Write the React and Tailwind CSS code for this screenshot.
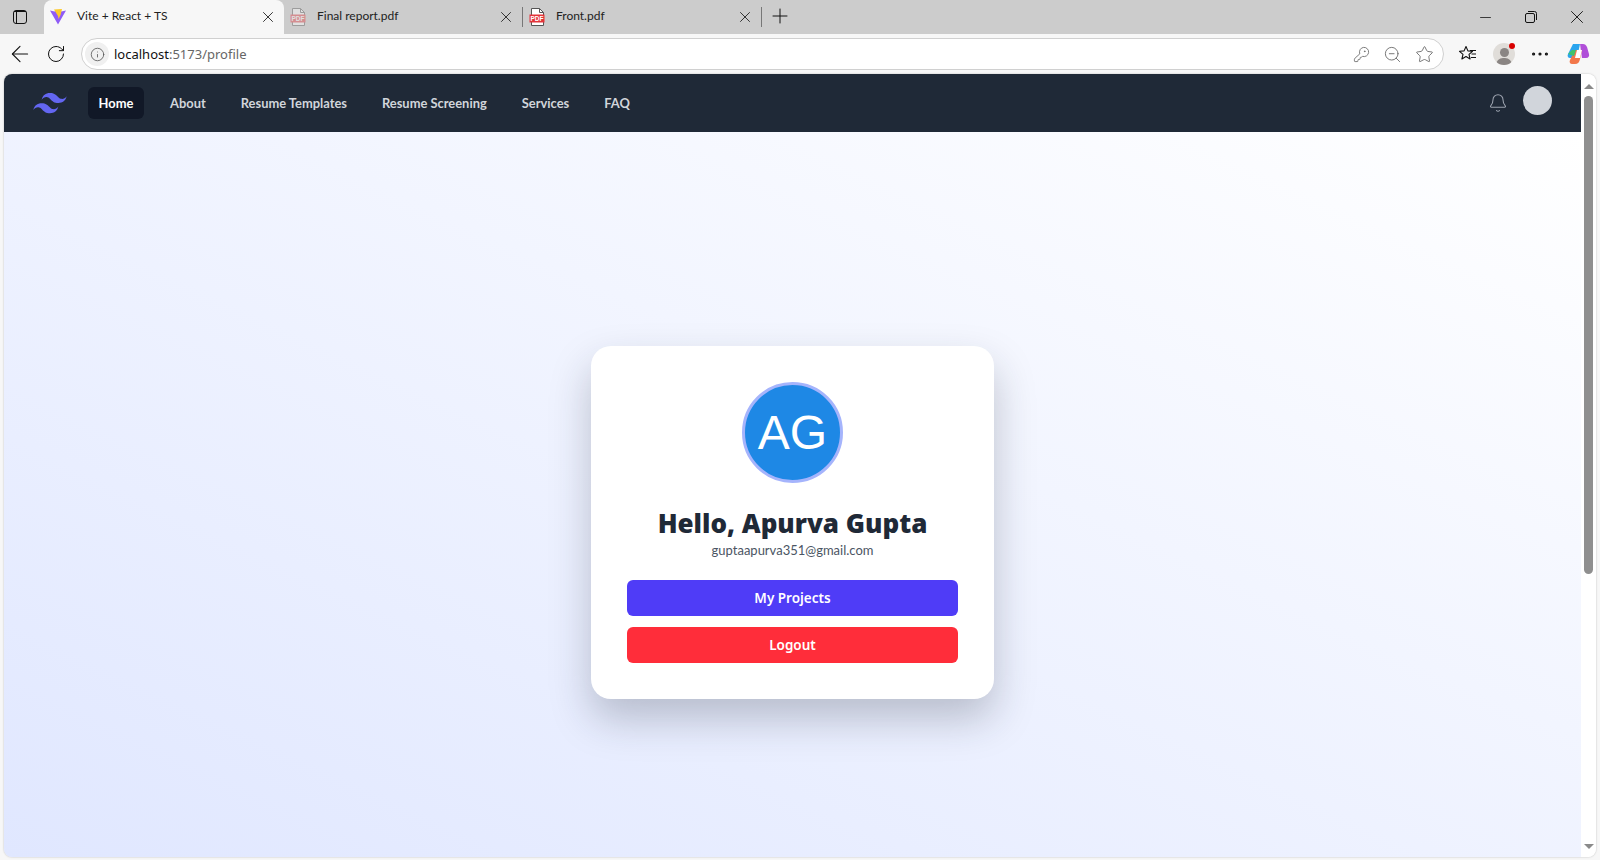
import React from 'react';
import { ArrowLeft, Bell, Info, KeyRound, Minus, MoreHorizontal, Plus, RotateCw, Star, X, ZoomOut } from 'lucide-react';

const navLinks = ['About', 'Resume Templates', 'Resume Screening', 'Services', 'FAQ'];

const ViteIcon = () => (
  <svg width="18" height="18" viewBox="0 0 18 18">
    <path d="M1 2.5 9 16.5 17 2.5 12.5 3.4 9 2 5.5 3.4z" fill="#8f5cf6" />
    <path d="M5 1.5 13 1 11.5 7 9.5 11 9 8z" fill="#fdc928" />
  </svg>
);

const PdfIcon = ({ faded }) => (
  <svg width="16" height="18" viewBox="0 0 16 18" className={faded ? 'opacity-40' : ''}>
    <path d="M2.5.5h8l4 4v13h-12z" fill="#fff" stroke="#555" />
    <path d="M10.5.5v4h4" fill="none" stroke="#555" />
    <rect x="0.5" y="6.5" width="15" height="8" fill="#e3343a" />
    <text x="8" y="13" fontSize="6.5" fontWeight="700" fill="#fff" textAnchor="middle" fontFamily="Liberation Sans, sans-serif">PDF</text>
  </svg>
);

const Tab = ({ icon, title, width, active }) => (
  <div
    className={`flex items-center h-[34px] shrink-0 pl-[5px] pr-[7px] ${active ? 'bg-[#f7f7f7] rounded-t-[8px]' : ''}`}
    style={{ width }}
  >
    <div className="w-[18px] flex justify-center shrink-0">{icon}</div>
    <span className="ml-[10px] -mt-[2px] flex-1 text-[12px] text-[#222] font-['Lato',sans-serif]">{title}</span>
    <X size={18} strokeWidth={1.2} className="text-[#222] shrink-0" />
  </div>
);

const Copilot = () => (
  <svg width="24" height="24" viewBox="0 0 24 24">
    <path d="M7 2h7l-3 14H4C2 16 1 14 2 12z" fill="#2aa5ee" />
    <path d="M14 2h3c2 0 3 1 4 3l2 7c.5 2-.5 4-3 4h-4z" fill="#b04fd8" />
    <path d="M9 8h7l-2 9c-.5 3-2 5-5 5H6c-2 0-3-2-2-4z" fill="#f2774a" />
    <path d="M11 8h5l-2 8h-5z" fill="#fff" />
    <path d="M2 12l4-4h4l-2 6z" fill="#3ec46d" />
  </svg>
);

const FavoritesIcon = () => (
  <svg width="20" height="20" viewBox="0 0 20 20" fill="none" stroke="#111" strokeWidth="1.1" strokeLinejoin="round">
    <path d="M8 2.5l1.9 4.4 4.6.4-3.5 3 1.1 4.7L8 12.5l-4.1 2.5 1.1-4.7-3.5-3 4.6-.4z" />
    <path d="M12 6.5h6M13.5 10h4.5M13 13.5h5" />
  </svg>
);

const App = () => {
  return (
    <div className="w-[1600px] h-[860px] overflow-hidden flex flex-col bg-[#f7f7f7] font-['Noto_Sans',sans-serif]">
      {/* tab strip */}
      <div className="h-[34px] bg-[#cccccc] flex items-center shrink-0">
        <div className="w-[44px] pr-[4px] flex justify-center shrink-0">
          <div className="w-[14px] h-[14px] border border-[#111] rounded-[3px] flex flex-col">
            <div className="h-[1px] bg-[#111]" />
            <div className="w-[3px] flex-1 border-r border-[#111]" />
          </div>
        </div>
        <Tab active width={240} icon={<ViteIcon />} title="Vite + React + TS" />
        <Tab width={238} icon={<PdfIcon faded />} title="Final report.pdf" />
        <div className="w-px h-[20px] bg-[#777] shrink-0" />
        <Tab width={238} icon={<PdfIcon />} title="Front.pdf" />
        <div className="w-px h-[20px] bg-[#777] shrink-0" />
        <Plus size={24} strokeWidth={1} className="ml-[6px] -mt-[2px] text-[#111]" />
        <div className="flex-1" />
        <div className="flex items-center">
          <div className="w-[46px] flex justify-center"><Minus size={17} strokeWidth={1.1} className="text-[#111]" /></div>
          <div className="w-[46px] flex justify-center">
            <svg width="14" height="14" viewBox="0 0 14 14" fill="none" stroke="#111" strokeWidth="1">
              <rect x="1.5" y="3.5" width="9" height="9" rx="1.5" />
              <path d="M4 1.5h6.5a2 2 0 0 1 2 2V10" />
            </svg>
          </div>
          <div className="w-[46px] flex justify-center"><X size={22} strokeWidth={1} className="text-[#111]" /></div>
        </div>
      </div>

      {/* toolbar */}
      <div className="h-[40px] flex items-center shrink-0">
        <ArrowLeft size={26} strokeWidth={1} className="ml-[7px] text-[#111]" />
        <RotateCw size={20} strokeWidth={1.2} className="ml-[13px] text-[#111]" />
        <div className="ml-[15px] w-[1363px] h-[32px] bg-white border border-[#d0d0d0] rounded-full flex items-center">
          <div className="ml-[3px] w-[24px] h-[24px] rounded-full bg-[#f0f0f0] flex items-center justify-center">
            <Info size={15} strokeWidth={1.3} className="text-[#555]" />
          </div>
          <span className="ml-[5px] mt-[1px] text-[13px] text-[#111]">
            localhost<span className="text-[#666]">:5173/profile</span>
          </span>
          <div className="flex-1" />
          <div className="flex items-center gap-[13px] pr-[9px] text-[#666]">
            <KeyRound size={17} strokeWidth={1.2} />
            <ZoomOut size={19} strokeWidth={1.1} />
            <Star size={19} strokeWidth={1.1} />
          </div>
        </div>
        <div className="ml-[14px]"><FavoritesIcon /></div>
        <div className="ml-[15px] w-[22px] h-[22px] rounded-full bg-[#e0ddd9] overflow-hidden shrink-0 flex flex-col items-center justify-end">
          <div className="w-[9px] h-[9px] rounded-full bg-[#8a8583] mb-[1px]" />
          <div className="w-[16px] h-[7px] rounded-t-full bg-[#8a8583]" />
        </div>
        <div className="w-[6px] h-[6px] rounded-full bg-[#d80000] -ml-[6px] -mt-[16px] shrink-0 relative" />
        <MoreHorizontal size={22} strokeWidth={1.5} className="ml-[14px] text-[#111]" />
        <div className="ml-[15px]"><Copilot /></div>
      </div>

      {/* browser viewport */}
      <div className="flex-1 ml-[4px] mr-[4px] mb-[3px] rounded-[8px] overflow-hidden flex shadow-[0_0_2px_rgba(0,0,0,0.25)] min-h-0">
        <div className="flex-1 flex flex-col min-w-0">
          <nav className="h-[58px] bg-[#1f2937] flex items-center shrink-0">
            <svg width="40" height="40" viewBox="0 0 24 24" fill="#6366f1" className="ml-[26px]">
              <path d="M12 6c-2.67 0-4.33 1.33-5 4 1-1.33 2.17-1.83 3.5-1.5.76.19 1.31.74 1.91 1.35.98 1 2.09 2.15 4.59 2.15 2.67 0 4.33-1.33 5-4-1 1.33-2.17 1.83-3.5 1.5-.76-.19-1.31-.74-1.91-1.35C15.61 7.15 14.5 6 12 6zm-5 6.15c-2.67 0-4.33 1.33-5 4 1-1.33 2.17-1.83 3.5-1.5.76.19 1.31.74 1.91 1.35.98 1 2.09 2.15 4.59 2.15 2.67 0 4.33-1.33 5-4-1 1.33-2.17 1.83-3.5 1.5-.76-.19-1.31-.74-1.91-1.35-.98-1-2.09-2.15-4.59-2.15z" />
            </svg>
            <div className="ml-[18px] flex items-center gap-[15px] font-['Lato',sans-serif]">
              <a className="h-[32px] w-[56px] mr-[1px] rounded-[6px] bg-[#111827] text-white text-[12.9px] font-bold flex items-center justify-center pt-[2px]">Home</a>
              {navLinks.map((label) => (
                <a key={label} className="h-[32px] px-[10px] rounded-[6px] text-[#d1d5db] text-[12.9px] font-bold flex items-center pt-[2px]">
                  {label}
                </a>
              ))}
            </div>
            <div className="flex-1" />
            <Bell size={20} strokeWidth={1.3} className="text-[#9ca3af]" />
            <div className="ml-[15px] mr-[29px] w-[29px] h-[29px] mt-[-6px] rounded-full bg-[#d1d5db]" />
          </nav>

          <main className="flex-1 bg-linear-to-tr from-[#e0e7ff] to-white flex items-center justify-center pt-[56px]">
            <div className="w-[403px] h-[353px] bg-white rounded-[20px] p-[36px] flex flex-col items-center shadow-[0_20px_40px_rgba(31,41,55,0.25)]">
              <div className="w-[101px] h-[101px] rounded-full bg-[#1e88e5] border-[3px] border-[#a5b4fc] flex items-center justify-center text-white text-[48px] font-['Liberation_Sans',sans-serif] shrink-0">
                AG
              </div>
              <h1 className="mt-[20px] text-[26px] leading-[40px] font-black text-[#1f2937] whitespace-nowrap shrink-0">
                Hello, Apurva Gupta
              </h1>
              <p className="-mt-[3px] text-[13px] leading-[20px] text-[#4b5563] font-['Lato',sans-serif] shrink-0">guptaapurva351@gmail.com</p>
              <button className="mt-[20px] w-full h-[36px] shrink-0 rounded-[6px] bg-[#4f3cf7] text-white text-[13.5px] font-semibold">
                My Projects
              </button>
              <button className="mt-[11px] w-full h-[36px] shrink-0 rounded-[6px] bg-[#ff2d3a] text-white text-[13.5px] font-semibold">
                Logout
              </button>
            </div>
          </main>
        </div>

        {/* scrollbar */}
        <div className="w-[15px] bg-white flex flex-col items-center shrink-0 pt-[10px]">
          <div className="w-0 h-0 border-x-[5px] border-x-transparent border-b-[5px] border-b-[#8a8a8a]" />
          <div className="mt-[7px] w-[9px] h-[478px] rounded-full bg-[#8f8f8f]" />
          <div className="flex-1" />
          <div className="w-0 h-0 border-x-[5px] border-x-transparent border-t-[5px] border-t-[#8a8a8a] mb-[8px]" />
        </div>
      </div>
    </div>
  );
};

export default App;
